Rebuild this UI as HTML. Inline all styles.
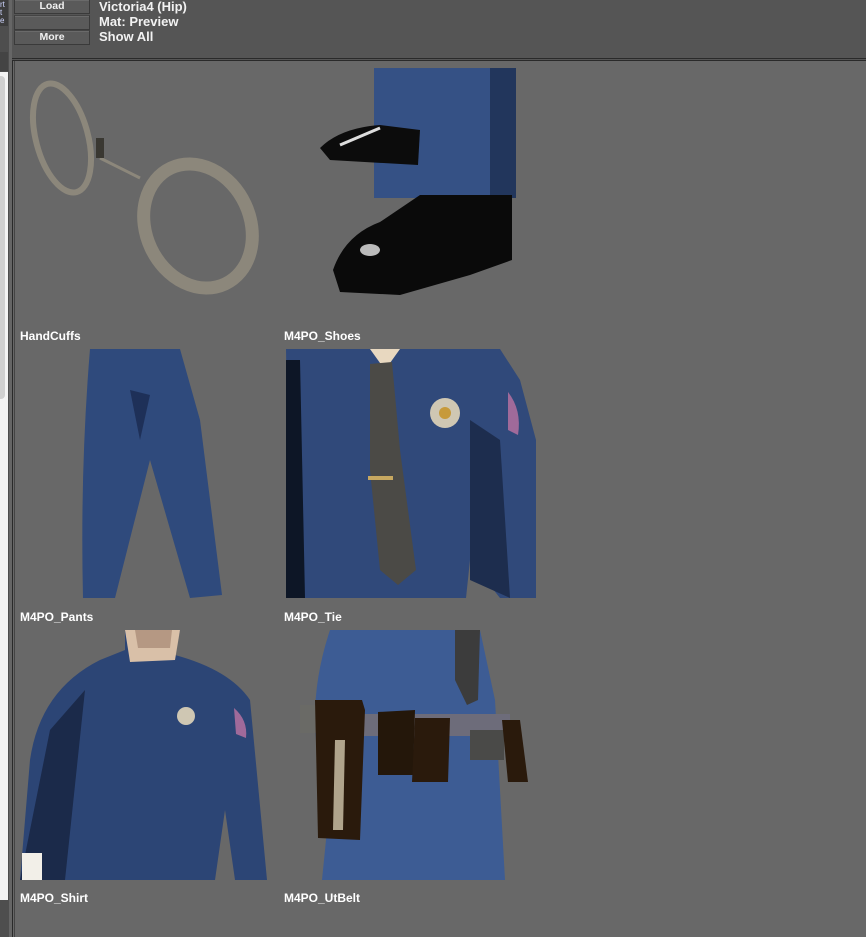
<!DOCTYPE html>
<html><head><meta charset="utf-8"><style>
html,body{margin:0;padding:0;width:866px;height:937px;overflow:hidden;background:#555;font-family:"Liberation Sans","DejaVu Sans",sans-serif;}
.a{position:absolute}
.btn{position:absolute;left:14px;width:74px;height:13px;border:1px solid #3a3a3a;border-top-color:#444;background:#5a5a5a;color:#f0f0f0;font-size:10.5px;font-weight:bold;line-height:13px;text-align:center;box-shadow:inset 0 1px 0 #6a6a6a}
.hd{position:absolute;left:99px;color:#f2f2f2;font-size:13px;font-weight:bold;line-height:14px}
.lbl{position:absolute;color:#fff;font-size:12px;font-weight:bold;line-height:14px}
</style></head><body>
<div class="a" style="left:0;top:0;width:9px;height:937px;background:#4e4e4e"></div>
<div class="a" style="left:0;top:0;width:8px;height:26px;background:#3c3c3c"></div>
<div class="a" style="left:0;top:1px;font-size:8px;color:#cfd6ff;line-height:8px">rt<br>t<br>e</div>
<div class="a" style="left:0;top:52px;width:8px;height:19px;background:#444"></div>
<div class="a" style="left:0;top:72px;width:8px;height:828px;background:#f4f4f4"></div>
<div class="a" style="left:0;top:76px;width:5px;height:323px;background:#d0d0d0;border-radius:0 4px 4px 0"></div>
<div class="a" style="left:9px;top:0;width:3px;height:937px;background:#666"></div>
<div class="btn" style="top:0;height:13px;border-top:none">Load</div>
<div class="btn" style="top:15px"></div>
<div class="btn" style="top:30px">More</div>
<div class="hd" style="top:0">Victoria4 (Hip)</div>
<div class="hd" style="top:15px">Mat: Preview</div>
<div class="hd" style="top:30px">Show All</div>
<div class="a" style="left:12px;top:58px;width:854px;height:1px;background:#2a2a2a"></div>
<div class="a" style="left:12px;top:60px;width:854px;height:877px;background:#686868;border-left:1px solid #2a2a2a;border-top:1px solid #2a2a2a;box-sizing:border-box"></div>
<div class="a" style="left:14px;top:61px;width:1px;height:876px;background:#444"></div>

<svg class="a" style="left:0;top:0" width="866" height="937">
<g fill="none" stroke="#8c877b">
<ellipse cx="62" cy="138" rx="26" ry="56" transform="rotate(-15 62 138)" stroke-width="6"/>
<ellipse cx="198" cy="226" rx="52" ry="64" transform="rotate(-25 198 226)" stroke-width="13"/>
<path d="M100 158 L140 178" stroke-width="3"/>
</g>
<rect x="96" y="138" width="8" height="20" fill="#3a3832"/>
<rect x="374" y="68" width="142" height="130" fill="#355185"/>
<rect x="490" y="68" width="26" height="130" fill="#22365c"/>
<path d="M320 148 Q340 128 380 125 L420 130 L418 165 L330 160 Z" fill="#0c0c0c"/>
<path d="M340 145 L380 128" stroke="#ddd" stroke-width="3"/>
<path d="M420 195 L512 195 L512 260 L470 275 L400 295 L340 292 L333 270 Q345 235 380 222 Z" fill="#0a0a0a"/>
<ellipse cx="370" cy="250" rx="10" ry="6" fill="#bbb"/>
<path d="M90 349 L180 349 L200 420 L222 595 L190 598 L150 460 L115 598 L83 598 Q80 470 90 349 Z" fill="#2f4a7c"/>
<path d="M130 390 L140 440 L150 395" fill="#1e3058"/>
<path d="M286 349 L500 349 L520 380 L536 440 L536 598 L500 598 L470 560 L466 598 L290 598 Z" fill="#30497a"/>
<path d="M286 360 L300 360 L305 598 L286 598 Z" fill="#0d1626"/>
<path d="M470 420 L500 440 L510 598 L470 580 Z" fill="#1d2d4e"/>
<path d="M370 349 L400 349 L385 370 Z" fill="#e8d8c0"/>
<path d="M370 364 L392 362 L400 450 L416 570 L398 585 L380 570 L370 470 Z" fill="#4b4a46"/>
<rect x="368" y="476" width="25" height="4" fill="#c7a860"/>
<circle cx="445" cy="413" r="15" fill="#cfc7b3"/>
<circle cx="445" cy="413" r="6" fill="#c79a3a"/>
<path d="M508 392 Q522 410 518 435 L508 430 Z" fill="#a06a9a"/>
<path d="M20 880 L30 760 Q40 690 100 660 L125 650 L125 630 L180 630 L175 655 Q230 670 250 700 L267 880 L235 880 L225 810 L215 880 Z" fill="#2c4575"/>
<path d="M20 880 L50 730 L85 690 L65 880 Z" fill="#1b2a4a"/>
<path d="M125 630 L180 630 L175 660 L130 662 Z" fill="#d9c0a8"/>
<path d="M135 630 L172 630 L170 648 L138 648 Z" fill="#b59883"/>
<rect x="22" y="853" width="20" height="27" fill="#f2efe8"/>
<circle cx="186" cy="716" r="9" fill="#cfc7b3"/>
<path d="M234 708 Q248 720 246 738 L236 734 Z" fill="#a06a9a"/>
<path d="M330 630 L480 630 L495 700 L505 880 L322 880 L330 800 Q300 720 330 630 Z" fill="#3d5c94"/>
<path d="M455 630 L480 630 L478 700 L467 705 L455 680 Z" fill="#3c3c3c"/>
<rect x="360" y="714" width="150" height="22" fill="#6d6c7a"/>
<rect x="470" y="730" width="34" height="30" fill="#4a4a48"/>
<rect x="300" y="705" width="22" height="28" fill="#6a6a66"/>
<path d="M315 700 L362 700 L365 710 L360 840 L318 838 Z" fill="#2a1a0c"/>
<path d="M335 740 L345 740 L343 830 L333 830 Z" fill="#b0a48c"/>
<path d="M378 712 L415 710 L413 775 L378 775 Z" fill="#24170a"/>
<path d="M415 718 L450 718 L448 782 L412 782 Z" fill="#2a1a0c"/>
<path d="M502 720 L520 720 L528 782 L508 782 Z" fill="#2a1a0c"/>
</svg>

<div class="lbl" style="left:20px;top:329px">HandCuffs</div>
<div class="lbl" style="left:284px;top:329px">M4PO_Shoes</div>
<div class="lbl" style="left:20px;top:610px">M4PO_Pants</div>
<div class="lbl" style="left:284px;top:610px">M4PO_Tie</div>
<div class="lbl" style="left:20px;top:891px">M4PO_Shirt</div>
<div class="lbl" style="left:284px;top:891px">M4PO_UtBelt</div>
</body></html>
